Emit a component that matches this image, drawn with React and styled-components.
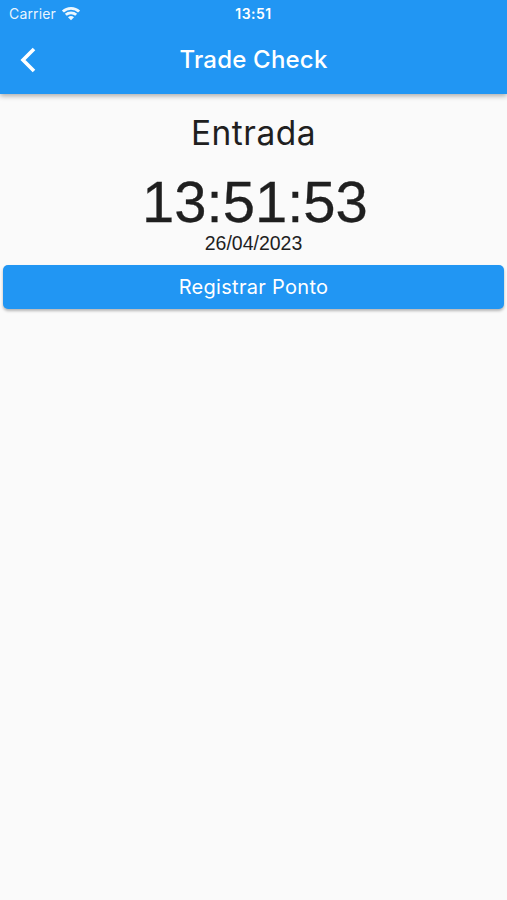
import React from 'react';
import styled, { createGlobalStyle } from 'styled-components';

const GlobalStyle = createGlobalStyle`
  * {
    box-sizing: border-box;
  }

  body {
    margin: 0;
    background: #fafafa;
    font-family: Inter, 'Liberation Sans', sans-serif;
  }
`;

const Screen = styled.div`
  display: flex;
  flex-direction: column;
  min-height: 900px;
  background: #fafafa;
  color: #1f1f1f;
`;

const Header = styled.header`
  height: 94px;
  background: #2196f3;
  color: #ffffff;
  box-shadow: 0 2px 5px rgba(0, 0, 0, 0.32);
`;

const StatusBar = styled.div`
  display: grid;
  grid-template-columns: 1fr auto 1fr;
  align-items: center;
  height: 27px;
  padding: 0 9px;
`;

const Carrier = styled.div`
  display: flex;
  align-items: center;
  gap: 6px;
  font-size: 14px;
  line-height: 20px;
  letter-spacing: 0.15px;
  color: rgba(255, 255, 255, 0.92);
`;

const StatusTime = styled.div`
  font-size: 14px;
  font-weight: 600;
  letter-spacing: 0.45px;
`;

const Toolbar = styled.div`
  display: grid;
  grid-template-columns: 56px 1fr 56px;
  align-items: center;
  height: 65px;
`;

const BackButton = styled.button`
  display: flex;
  align-items: center;
  justify-content: center;
  height: 56px;
  padding: 0;
  border: none;
  background: none;
  color: inherit;
`;

const Title = styled.h1`
  margin: 0;
  font-size: 24px;
  font-weight: 500;
  letter-spacing: 0.2px;
  text-align: center;
`;

const Content = styled.main`
  display: flex;
  flex-direction: column;
  align-items: center;
  padding: 17px 3px 0;
`;

const Label = styled.div`
  font-size: 33.5px;
  line-height: 44px;
  letter-spacing: 0.5px;
`;

const Clock = styled.div`
  margin-top: 14px;
  padding-left: 3px;
  font-family: 'Liberation Sans', sans-serif;
  font-size: 58px;
  line-height: 66px;
  -webkit-text-stroke: 0.3px currentColor;
`;

const DateText = styled.div`
  margin-top: -3px;
  font-family: 'Liberation Sans', sans-serif;
  font-size: 19.5px;
  line-height: 22px;
`;

const RegisterButton = styled.button`
  width: 100%;
  height: 44px;
  margin-top: 11px;
  border: none;
  border-radius: 5px;
  background: #2196f3;
  color: #ffffff;
  box-shadow: 0 2px 3px rgba(0, 0, 0, 0.28);
  font-family: inherit;
  font-size: 20px;
  letter-spacing: 0.3px;
`;

const WifiIcon = () => (
  <svg width="18" height="15" viewBox="0 0 19 15" fill="none" stroke="currentColor" strokeWidth="2.9">
    <path d="M1 5.5C5.5 0.8 13.5 0.8 18 5.5" />
    <path d="M4 8.9C7 6 12 6 15 8.9" />
    <path d="M9.5 14.5L6.3 11.4Q9.5 8.8 12.7 11.4Z" fill="currentColor" stroke="none" />
  </svg>
);

const BackIcon = () => (
  <svg width="16" height="26" viewBox="0 0 16 26" fill="none" stroke="currentColor" strokeWidth="3.6">
    <path d="M14 2L3 13L14 24" />
  </svg>
);

const App = () => (
  <>
    <GlobalStyle />
    <Screen>
      <Header>
        <StatusBar>
          <Carrier>
            Carrier <WifiIcon />
          </Carrier>
          <StatusTime>13:51</StatusTime>
        </StatusBar>
        <Toolbar>
          <BackButton aria-label="Voltar">
            <BackIcon />
          </BackButton>
          <Title>Trade Check</Title>
        </Toolbar>
      </Header>
      <Content>
        <Label>Entrada</Label>
        <Clock>13:51:53</Clock>
        <DateText>26/04/2023</DateText>
        <RegisterButton>Registrar Ponto</RegisterButton>
      </Content>
    </Screen>
  </>
);

export default App;
